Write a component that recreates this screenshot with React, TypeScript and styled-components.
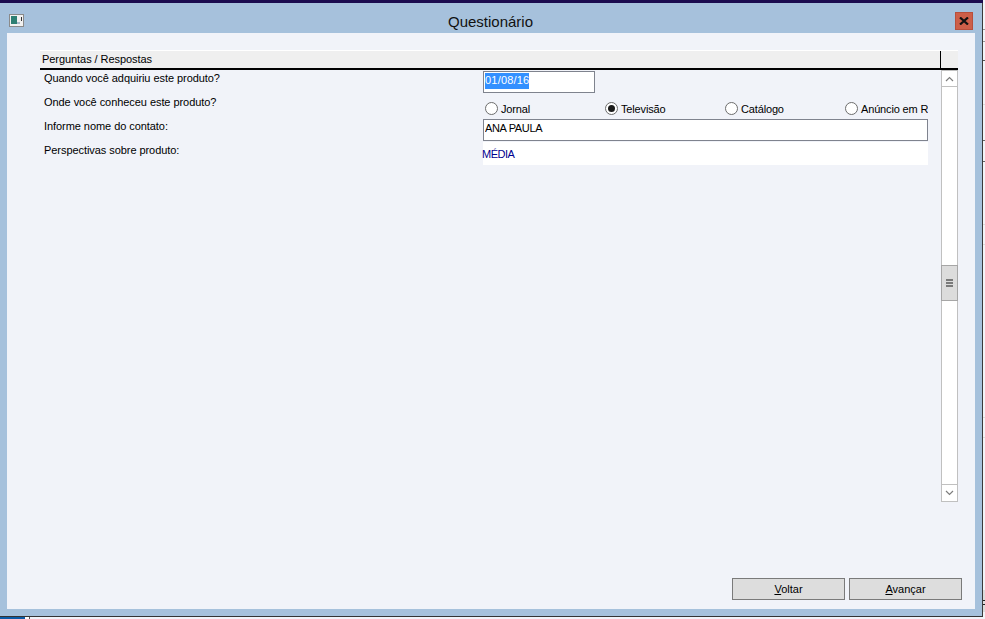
import React from "react";
import styled, { createGlobalStyle } from "styled-components";

const Global = createGlobalStyle`
  html, body { margin: 0; padding: 0; width: 985px; height: 619px; overflow: hidden; background: #f0f0f0; }
  #root { width: 985px; height: 619px; }
  * { box-sizing: border-box; }
`;
const Page = styled.div`
  width: 985px; height: 619px; display: flex; overflow: hidden;
  font-family: "Liberation Sans", Arial, sans-serif; font-size: 11px; color: #000; letter-spacing: -0.06px;
`;
const Left = styled.div`width: 983px; display: flex; flex-direction: column;`;
const TopStrip = styled.div`height: 3px; background: #1b0b4f; flex: none;`;
const Frame = styled.div`
  height: 613px; flex: none; background: #a6c1dc; display: flex; flex-direction: column;
  padding: 0 7px 7px 7px; border-right: 1px solid #3a3a3a;
`;
const TitleBar = styled.div`
  height: 30px; flex: none; margin: 0 -7px; padding: 5px 9px 0 9px;
  display: flex; align-items: center; justify-content: space-between;
`;
const Title = styled.div`font-size: 15px; color: #111; flex: 1; text-align: center; padding: 2px 0 0 2px; letter-spacing: 0;`;
const IconBox = styled.svg`width: 15px; height: 13px; display: block; flex: none;`;
const Close = styled.button`
  width: 18px; height: 18px; padding: 0; border: 1px solid #b84f3c; background: #cd5f49;
  display: flex; align-items: center; justify-content: center;
`;
const Client = styled.div`
  flex: 1; background: #f1f3f9; padding: 17px 13px 9px 33px; display: flex; flex-direction: column;
`;
const Header = styled.div`
  height: 20px; flex: none; display: flex; border-top: 1px solid #fff; border-bottom: 2px solid #000;
  background: #efefef; width: 918px;
`;
const HeadCell = styled.div`
  width: 901px; padding: 0 0 0 2px; line-height: 16px; border-right: 1px solid #000;
`;
const Body = styled.div`flex: 1; display: flex; width: 918px;`;
const Rows = styled.div`
  width: 901px; height: 100px; padding-left: 4px; padding-top: 1px;
  display: grid; grid-template-columns: 439px 445px; grid-template-rows: 24px 24px 23px 24px;
`;
const Label = styled.div<{ $drop?: number }>`line-height: 14px; padding-top: ${(p) => p.$drop ?? 0}px;`;
const Field = styled.input<{ $w: number }>`
  width: ${(p) => p.$w}px; height: 22px; border: 1px solid #7f838e; background: #fff; outline: none;
  font: inherit; padding: 0 0 5px 1px; color: #000; letter-spacing: -0.35px;
`;
const Selected = styled.span`display: inline-block; height: 16px; line-height: 15px; background: #3390ff; color: #fff; letter-spacing: 0.2px;`;
const DateField = styled.div`
  width: 112px; height: 22px; border: 1px solid #7f838e; background: #fff; padding: 0 1px; line-height: 16px;
`;
const Radios = styled.div`
  width: 445px; overflow: hidden; display: flex; padding: 7px 0 0 2px; white-space: nowrap;
`;
const RadioItem = styled.div`width: 120px; flex: none; display: flex; align-items: center; gap: 3px; height: 13px; letter-spacing: -0.15px;`;
const Radio = styled.span<{ $on?: boolean }>`
  width: 13px; height: 13px; border-radius: 50%; border: 1px solid #6d6d6d; background: #fff; flex: none;
  display: flex; align-items: center; justify-content: center;
  &::after { content: ""; width: 7px; height: 7px; border-radius: 50%; background: ${(p) => (p.$on ? "#1a1a1a" : "transparent")}; }
`;
const ReadOnly = styled.div`
  width: 445px; height: 23px; background: #fff; color: #00008f; line-height: 14px; padding-top: 5px; letter-spacing: -0.5px; text-indent: -1px;
`;
const Scrollbar = styled.div`
  width: 17px; height: 432px; margin-left: 1px; background: #fff; border: 1px solid #c0c0c0; border-width: 0 1px 1px;
  display: flex; flex-direction: column;
`;
const ScrollBtn = styled.div<{ $end?: boolean }>`
  height: 17px; flex: none; background: #fff; display: flex; align-items: center; justify-content: center;
  ${(p) => (p.$end ? "border-top: 1px solid #c0c0c0; margin-top: auto;" : "border-bottom: 1px solid #c0c0c0; border-top: 1px solid #c0c0c0;")}
`;
const Thumb = styled.div`
  height: 36px; margin: 178px -1px 0; flex: none; background: #dcdcdc; border: 1px solid #a6a6a6;
  display: flex; flex-direction: column; align-items: center; justify-content: center; gap: 1px;
`;
const Grip = styled.i`display: block; width: 7px; height: 2px; background: #7a7a7a;`;
const Footer = styled.div`display: flex; justify-content: flex-end; gap: 4px; flex: none;`;
const Btn = styled.button`
  width: 113px; height: 22px; background: #dddddd; border: 1px solid #7a7a7a; font: inherit; padding: 0; color: #000;
  u { text-decoration: underline; }
`;
const BottomStrip = styled.div`flex: 1; display: flex; border-top: 1px solid #333; background: #f1f3f9;`;
const Task = styled.div`width: 25px; background: #0b5aa6;`;
const TaskGap = styled.div`width: 5px; background: #fff; border-right: 1px solid #555;`;
const tick = (y: number, c: string, h = 1) => `linear-gradient(${c}, ${c}) 0 ${y}px / 100% ${h}px no-repeat`;
const RightEdge = styled.div`
  width: 2px;
  background: ${[
    tick(29, "#999"), tick(41, "#999"), tick(60, "#555"), tick(104, "#ddd"), tick(140, "#666"), tick(161, "#666"),
    tick(224, "#ddd"), tick(244, "#ddd"), tick(417, "#ddd"), tick(437, "#ddd"), tick(600, "#222", 1), tick(604, "#222", 1),
    tick(590, "#dcdcdc", 22), tick(0, "#f3f4f8", 619),
  ].join(", ")};
`;

const Chevron = ({ d }: { d: string }) => (
  <svg width="9" height="6" viewBox="0 0 9 6"><path d={d} fill="none" stroke="#7d7d7d" strokeWidth="1.2" /></svg>
);

export default function App() {
  return (
    <Page>
      <Global />
      <Left>
        <TopStrip />
        <Frame>
          <TitleBar>
            <IconBox viewBox="0 0 15 13">
              <rect x="0.5" y="0.5" width="14" height="12" fill="#f1f1f1" stroke="#8a8a8a" />
              <rect x="2" y="2" width="6" height="8" fill="#2d7f73" />
              <rect x="8" y="8" width="3" height="2" fill="#a9b9c9" />
              <rect x="12" y="3" width="1" height="4" fill="#333" />
            </IconBox>
            <Title>Questionário</Title>
            <Close aria-label="Fechar">
              <svg width="10" height="8" viewBox="0 0 10 8"><path d="M1 0.5 L9 7.5 M9 0.5 L1 7.5" stroke="#111" strokeWidth="2.2" /></svg>
            </Close>
          </TitleBar>
          <Client>
            <Header><HeadCell>Perguntas / Respostas</HeadCell></Header>
            <Body>
              <Rows>
                <Label>Quando você adquiriu este produto?</Label>
                <DateField><Selected>01/08/16</Selected></DateField>
                <Label>Onde você conheceu este produto?</Label>
                <Radios>
                  <RadioItem><Radio />Jornal</RadioItem>
                  <RadioItem><Radio $on />Televisão</RadioItem>
                  <RadioItem><Radio />Catálogo</RadioItem>
                  <RadioItem><Radio />Anúncio em Rádio</RadioItem>
                </Radios>
                <Label>Informe nome do contato:</Label>
                <Field $w={445} defaultValue="ANA PAULA" />
                <Label $drop={1}>Perspectivas sobre produto:</Label>
                <ReadOnly>MÉDIA</ReadOnly>
              </Rows>
              <Scrollbar>
                <ScrollBtn><Chevron d="M1 5 L4.5 1.5 L8 5" /></ScrollBtn>
                <Thumb><Grip /><Grip /><Grip /></Thumb>
                <ScrollBtn $end><Chevron d="M1 1 L4.5 4.5 L8 1" /></ScrollBtn>
              </Scrollbar>
            </Body>
            <Footer>
              <Btn><u>V</u>oltar</Btn>
              <Btn><u>A</u>vançar</Btn>
            </Footer>
          </Client>
        </Frame>
        <BottomStrip><Task /><TaskGap /></BottomStrip>
      </Left>
      <RightEdge />
    </Page>
  );
}
